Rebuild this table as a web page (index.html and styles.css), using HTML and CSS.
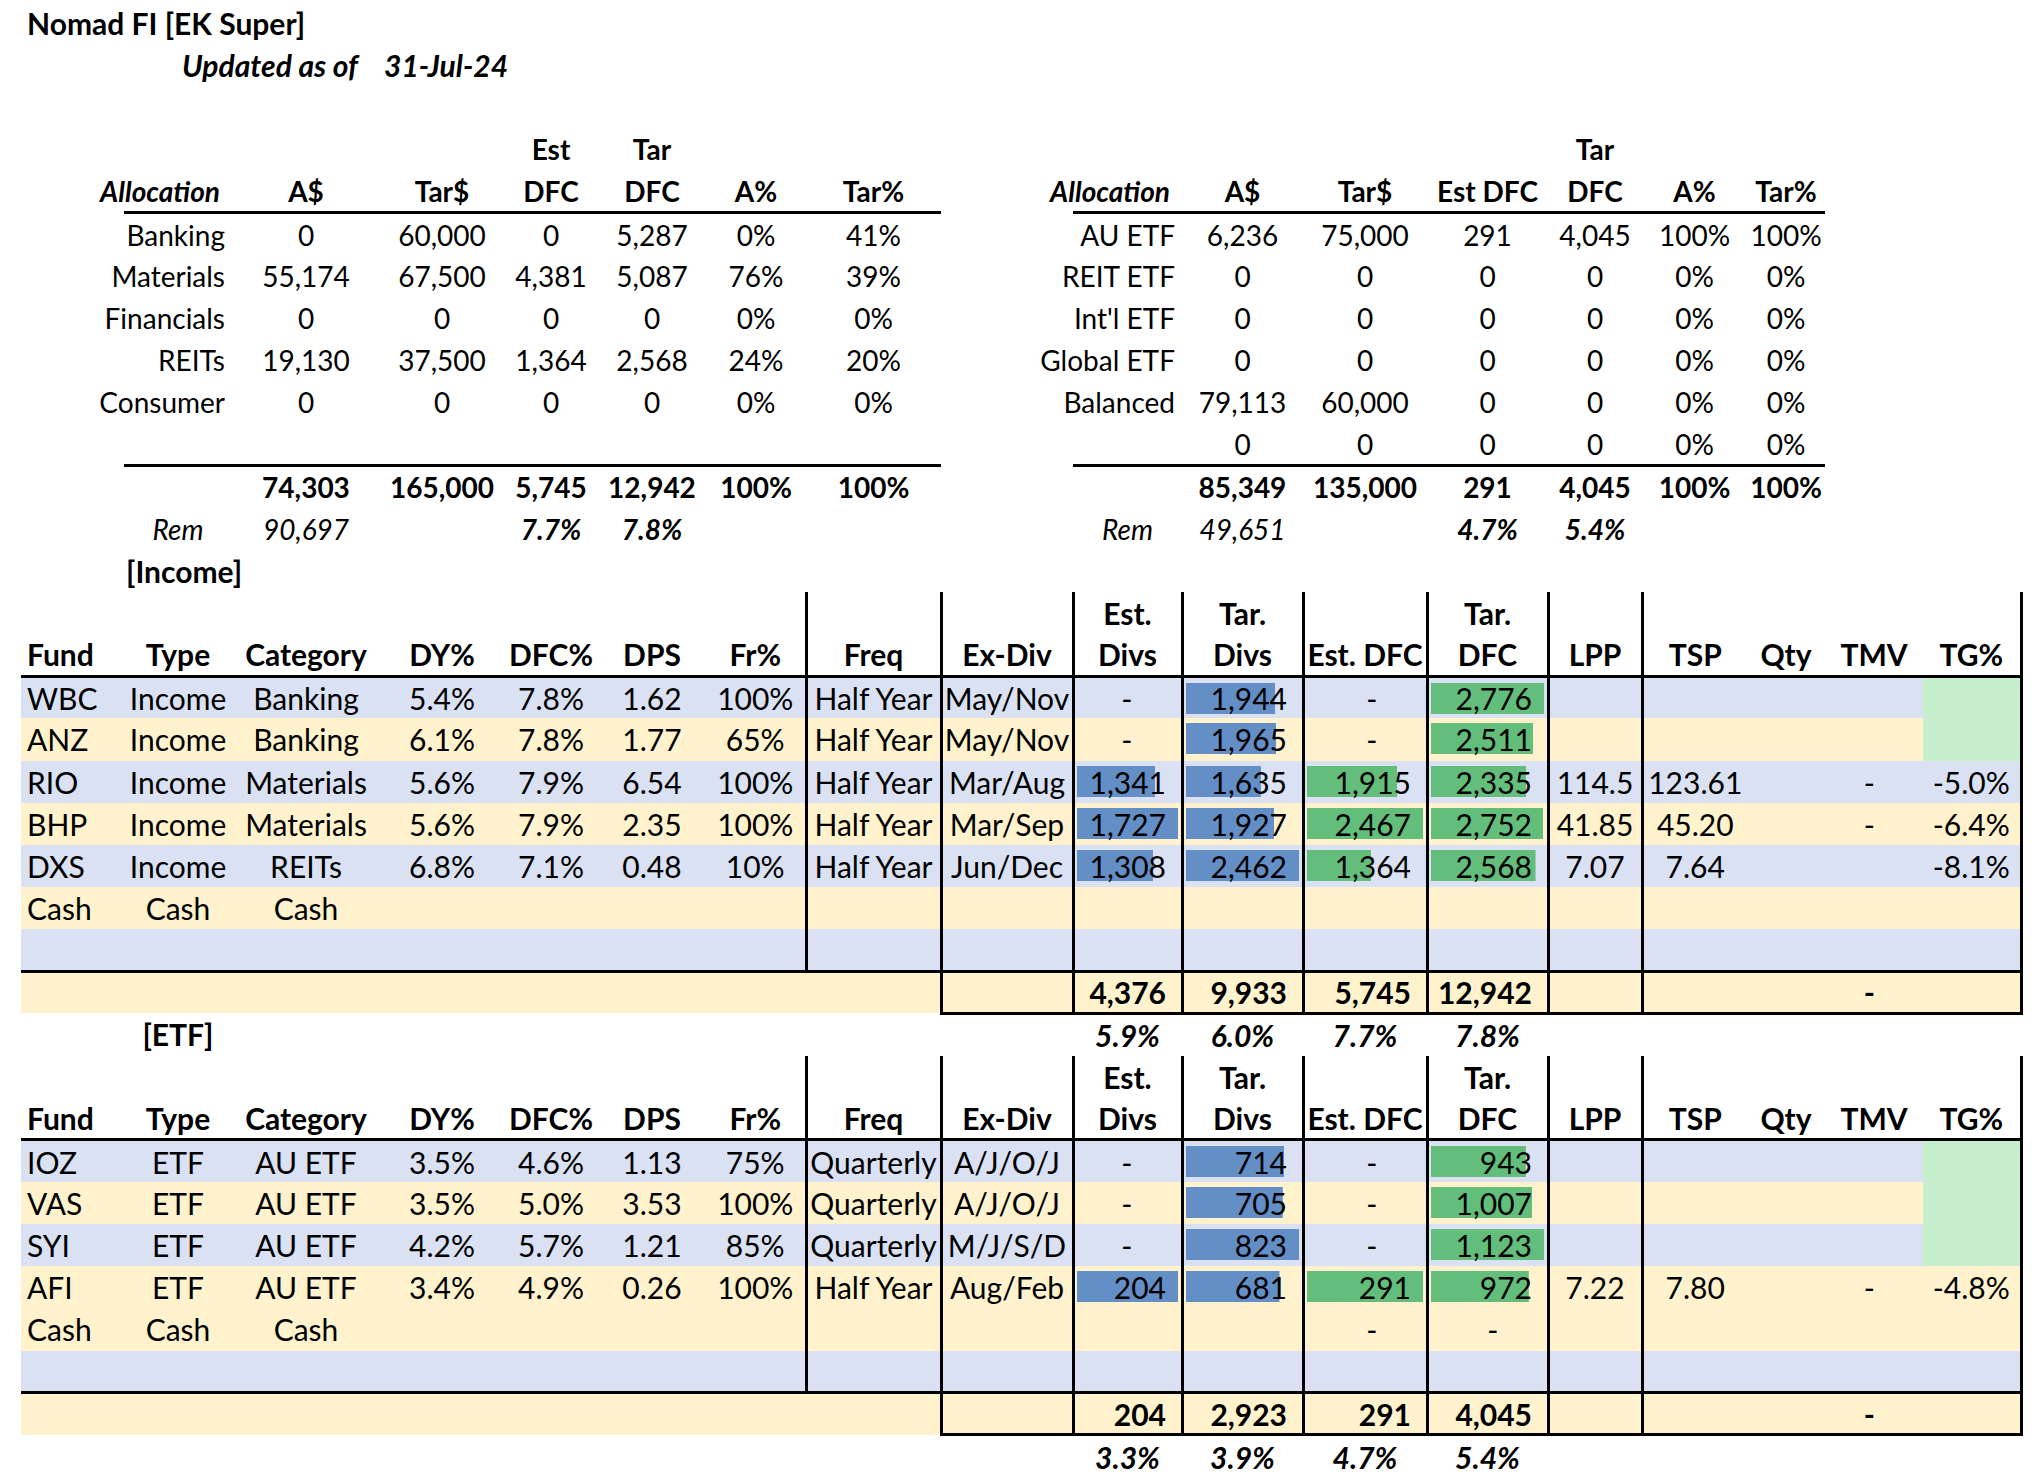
FILE: index.html
```html
<!DOCTYPE html>
<html lang="en">
<head>
<meta charset="utf-8">
<title>Nomad FI [EK Super]</title>
<link rel="stylesheet" href="styles.css">
</head>
<body>
<table class="sheet">
  <colgroup>
    <col class="w103"><col class="w108"><col class="w148"><col class="w124"><col class="w94"><col class="w108"><col class="w100"><col class="w135"><col class="w132"><col class="w109"><col class="w121"><col class="w124"><col class="w121"><col class="w94"><col class="w105"><col class="w78"><col class="w98"><col class="w98">
  </colgroup>
  <tbody>
    <!-- row 0 -->
    <tr><td colspan="6" class="title">Nomad FI [EK Super]</td></tr>
    <!-- row 1 -->
    <tr><td colspan="3" class="upd">Updated as of</td><td colspan="2" class="date">31-Jul-24</td></tr>
    <!-- row 2 -->
    <tr><td></td></tr>
    <!-- row 3 -->
    <tr class="sm"><td></td><td></td><td></td><td></td><td class="b">Est</td><td class="b">Tar</td><td></td><td></td><td></td><td></td><td></td><td></td><td></td><td class="b">Tar</td><td></td><td></td><td></td><td></td></tr>
    <!-- row 4 -->
    <tr class="sm ahead">
      <td></td><td class="alloc ln"><div class="rt">Allocation</div></td><td class="ln">A$</td><td class="ln">Tar$</td><td class="ln">DFC</td><td class="ln">DFC</td><td class="ln">A%</td><td class="ln">Tar%</td>
      <td></td><td class="alloc ln"><div class="rt">Allocation</div></td><td class="ln">A$</td><td class="ln">Tar$</td><td class="ln">Est DFC</td><td class="ln">DFC</td><td class="ln">A%</td><td class="ln">Tar%</td><td></td><td></td>
    </tr>
    <tr class="sm">
      <td></td><td class="lbl"><div class="rt">Banking</div></td><td>0</td><td>60,000</td><td>0</td><td>5,287</td><td>0%</td><td>41%</td>
      <td></td><td class="lbl"><div class="rt">AU ETF</div></td><td>6,236</td><td>75,000</td><td>291</td><td>4,045</td><td>100%</td><td>100%</td><td></td><td></td>
    </tr>
    <tr class="sm">
      <td></td><td class="lbl"><div class="rt">Materials</div></td><td>55,174</td><td>67,500</td><td>4,381</td><td>5,087</td><td>76%</td><td>39%</td>
      <td></td><td class="lbl"><div class="rt">REIT ETF</div></td><td>0</td><td>0</td><td>0</td><td>0</td><td>0%</td><td>0%</td><td></td><td></td>
    </tr>
    <tr class="sm">
      <td></td><td class="lbl"><div class="rt">Financials</div></td><td>0</td><td>0</td><td>0</td><td>0</td><td>0%</td><td>0%</td>
      <td></td><td class="lbl"><div class="rt">Int'l ETF</div></td><td>0</td><td>0</td><td>0</td><td>0</td><td>0%</td><td>0%</td><td></td><td></td>
    </tr>
    <tr class="sm">
      <td></td><td class="lbl"><div class="rt">REITs</div></td><td>19,130</td><td>37,500</td><td>1,364</td><td>2,568</td><td>24%</td><td>20%</td>
      <td></td><td class="lbl"><div class="rt">Global ETF</div></td><td>0</td><td>0</td><td>0</td><td>0</td><td>0%</td><td>0%</td><td></td><td></td>
    </tr>
    <tr class="sm">
      <td></td><td class="lbl"><div class="rt">Consumer</div></td><td>0</td><td>0</td><td>0</td><td>0</td><td>0%</td><td>0%</td>
      <td></td><td class="lbl"><div class="rt">Balanced</div></td><td>79,113</td><td>60,000</td><td>0</td><td>0</td><td>0%</td><td>0%</td><td></td><td></td>
    </tr>
    <tr class="sm">
      <td></td><td class="ln"></td><td class="ln"></td><td class="ln"></td><td class="ln"></td><td class="ln"></td><td class="ln"></td><td class="ln"></td>
      <td></td><td class="ln"></td><td class="ln">0</td><td class="ln">0</td><td class="ln">0</td><td class="ln">0</td><td class="ln">0%</td><td class="ln">0%</td><td></td><td></td>
    </tr>
    <tr class="sm bold">
      <td></td><td></td><td>74,303</td><td>165,000</td><td>5,745</td><td>12,942</td><td>100%</td><td>100%</td>
      <td></td><td></td><td>85,349</td><td>135,000</td><td>291</td><td>4,045</td><td>100%</td><td>100%</td><td></td><td></td>
    </tr>
    <tr class="sm">
      <td></td><td class="i">Rem</td><td class="i">90,697</td><td></td><td class="bi">7.7%</td><td class="bi">7.8%</td><td></td><td></td>
      <td></td><td class="i">Rem</td><td class="i">49,651</td><td></td><td class="bi">4.7%</td><td class="bi">5.4%</td><td></td><td></td><td></td><td></td>
    </tr>
    <tr><td></td><td class="b">[Income]</td></tr>

    <!-- Income table -->
    <tr class="m"><td></td><td></td><td></td><td></td><td></td><td></td><td></td><td></td><td></td><td class="b">Est.</td><td class="b">Tar.</td><td></td><td class="b">Tar.</td><td></td><td></td><td></td><td></td><td></td></tr>
    <tr class="m hd"><td>Fund</td><td>Type</td><td>Category</td><td>DY%</td><td>DFC%</td><td>DPS</td><td>Fr%</td><td>Freq</td><td>Ex-Div</td><td>Divs</td><td>Divs</td><td>Est. DFC</td><td>DFC</td><td>LPP</td><td>TSP</td><td>Qty</td><td>TMV</td><td>TG%</td></tr>
    <tr class="m bl"><td>WBC</td><td>Income</td><td>Banking</td><td>5.4%</td><td>7.8%</td><td>1.62</td><td>100%</td><td>Half Year</td><td>May/Nov</td><td class="d">-</td><td class="r bar blue" style="--p:.7896">1,944</td><td class="d">-</td><td class="r bar green" style="--p:1">2,776</td><td></td><td></td><td></td><td></td><td class="tg"></td></tr>
    <tr class="m ye"><td>ANZ</td><td>Income</td><td>Banking</td><td>6.1%</td><td>7.8%</td><td>1.77</td><td>65%</td><td>Half Year</td><td>May/Nov</td><td class="d">-</td><td class="r bar blue" style="--p:.7981">1,965</td><td class="d">-</td><td class="r bar green" style="--p:.9045">2,511</td><td></td><td></td><td></td><td></td><td class="tg"></td></tr>
    <tr class="m bl"><td>RIO</td><td>Income</td><td>Materials</td><td>5.6%</td><td>7.9%</td><td>6.54</td><td>100%</td><td>Half Year</td><td>Mar/Aug</td><td class="r bar blue" style="--p:.7765">1,341</td><td class="r bar blue" style="--p:.6641">1,635</td><td class="r bar green" style="--p:.7762">1,915</td><td class="r bar green" style="--p:.8411">2,335</td><td>114.5</td><td>123.61</td><td></td><td class="d">-</td><td>-5.0%</td></tr>
    <tr class="m ye"><td>BHP</td><td>Income</td><td>Materials</td><td>5.6%</td><td>7.9%</td><td>2.35</td><td>100%</td><td>Half Year</td><td>Mar/Sep</td><td class="r bar blue" style="--p:1">1,727</td><td class="r bar blue" style="--p:.7827">1,927</td><td class="r bar green" style="--p:1">2,467</td><td class="r bar green" style="--p:.9914">2,752</td><td>41.85</td><td>45.20</td><td></td><td class="d">-</td><td>-6.4%</td></tr>
    <tr class="m bl"><td>DXS</td><td>Income</td><td>REITs</td><td>6.8%</td><td>7.1%</td><td>0.48</td><td>10%</td><td>Half Year</td><td>Jun/Dec</td><td class="r bar blue" style="--p:.7574">1,308</td><td class="r bar blue" style="--p:1">2,462</td><td class="r bar green" style="--p:.5529">1,364</td><td class="r bar green" style="--p:.9251">2,568</td><td>7.07</td><td>7.64</td><td></td><td></td><td>-8.1%</td></tr>
    <tr class="m ye"><td>Cash</td><td>Cash</td><td>Cash</td><td></td><td></td><td></td><td></td><td></td><td></td><td></td><td></td><td></td><td></td><td></td><td></td><td></td><td></td><td></td></tr>
    <tr class="m bl end"><td></td><td></td><td></td><td></td><td></td><td></td><td></td><td></td><td></td><td></td><td></td><td></td><td></td><td></td><td></td><td></td><td></td><td></td></tr>
    <tr class="tot ye"><td></td><td></td><td></td><td></td><td></td><td></td><td></td><td></td><td></td><td class="r">4,376</td><td class="r">9,933</td><td class="r">5,745</td><td class="r">12,942</td><td></td><td></td><td></td><td class="d">-</td><td></td></tr>
    <tr><td></td><td class="b">[ETF]</td><td></td><td></td><td></td><td></td><td></td><td></td><td></td><td class="bi">5.9%</td><td class="bi">6.0%</td><td class="bi">7.7%</td><td class="bi">7.8%</td><td></td><td></td><td></td><td></td><td></td></tr>

    <!-- ETF table -->
    <tr class="m"><td></td><td></td><td></td><td></td><td></td><td></td><td></td><td></td><td></td><td class="b">Est.</td><td class="b">Tar.</td><td></td><td class="b">Tar.</td><td></td><td></td><td></td><td></td><td></td></tr>
    <tr class="m hd"><td>Fund</td><td>Type</td><td>Category</td><td>DY%</td><td>DFC%</td><td>DPS</td><td>Fr%</td><td>Freq</td><td>Ex-Div</td><td>Divs</td><td>Divs</td><td>Est. DFC</td><td>DFC</td><td>LPP</td><td>TSP</td><td>Qty</td><td>TMV</td><td>TG%</td></tr>
    <tr class="m bl"><td>IOZ</td><td>ETF</td><td>AU ETF</td><td>3.5%</td><td>4.6%</td><td>1.13</td><td>75%</td><td>Quarterly</td><td>A/J/O/J</td><td class="d">-</td><td class="r bar blue" style="--p:.8676">714</td><td class="d">-</td><td class="r bar green" style="--p:.8397">943</td><td></td><td></td><td></td><td></td><td class="tg"></td></tr>
    <tr class="m ye"><td>VAS</td><td>ETF</td><td>AU ETF</td><td>3.5%</td><td>5.0%</td><td>3.53</td><td>100%</td><td>Quarterly</td><td>A/J/O/J</td><td class="d">-</td><td class="r bar blue" style="--p:.8566">705</td><td class="d">-</td><td class="r bar green" style="--p:.8967">1,007</td><td></td><td></td><td></td><td></td><td class="tg"></td></tr>
    <tr class="m bl"><td>SYI</td><td>ETF</td><td>AU ETF</td><td>4.2%</td><td>5.7%</td><td>1.21</td><td>85%</td><td>Quarterly</td><td>M/J/S/D</td><td class="d">-</td><td class="r bar blue" style="--p:1">823</td><td class="d">-</td><td class="r bar green" style="--p:1">1,123</td><td></td><td></td><td></td><td></td><td class="tg"></td></tr>
    <tr class="m ye"><td>AFI</td><td>ETF</td><td>AU ETF</td><td>3.4%</td><td>4.9%</td><td>0.26</td><td>100%</td><td>Half Year</td><td>Aug/Feb</td><td class="r bar blue" style="--p:1">204</td><td class="r bar blue" style="--p:.8275">681</td><td class="r bar green" style="--p:1">291</td><td class="r bar green" style="--p:.8655">972</td><td>7.22</td><td>7.80</td><td></td><td class="d">-</td><td>-4.8%</td></tr>
    <tr class="m ye"><td>Cash</td><td>Cash</td><td>Cash</td><td></td><td></td><td></td><td></td><td></td><td></td><td></td><td></td><td class="d">-</td><td class="d">-</td><td></td><td></td><td></td><td></td><td></td></tr>
    <tr class="m bl end"><td></td><td></td><td></td><td></td><td></td><td></td><td></td><td></td><td></td><td></td><td></td><td></td><td></td><td></td><td></td><td></td><td></td><td></td></tr>
    <tr class="tot ye"><td></td><td></td><td></td><td></td><td></td><td></td><td></td><td></td><td></td><td class="r">204</td><td class="r">2,923</td><td class="r">291</td><td class="r">4,045</td><td></td><td></td><td></td><td class="d">-</td><td></td></tr>
    <tr><td></td><td></td><td></td><td></td><td></td><td></td><td></td><td></td><td></td><td class="bi">3.3%</td><td class="bi">3.9%</td><td class="bi">4.7%</td><td class="bi">5.4%</td><td></td><td></td><td></td><td></td><td></td></tr>
  </tbody>
</table>
</body>
</html>
```

FILE: styles.css
```css
:root {
  --band-blue: #d9e1f2;
  --band-yellow: #fff2cc;
  --bar-blue: #638ec6;
  --bar-green: #63be7b;
  --good: #c6efce;
  --line: 3px solid #000;
}

body {
  margin: 0;
  background: #fff;
  color: #000;
  font-family: Lato, "Liberation Sans", sans-serif;
  font-size: 30px;
}

.sheet {
  border-collapse: collapse;
  table-layout: fixed;
  width: 2000px;
  margin: 2px 0 0 21px;
}

.w103 { width: 103px; }
.w108 { width: 108px; }
.w148 { width: 148px; }
.w124 { width: 124px; }
.w94 { width: 94px; }
.w100 { width: 100px; }
.w135 { width: 135px; }
.w132 { width: 132px; }
.w109 { width: 109px; }
.w121 { width: 121px; }
.w105 { width: 105px; }
.w78 { width: 78px; }
.w98 { width: 98px; }

.sheet tr { height: 42.15px; }

.sheet td {
  padding: 0 2px;
  text-align: center;
  vertical-align: middle;
  white-space: nowrap;
  line-height: 1;
}

/* the two allocation summaries use a slightly smaller face */
.sm td { font-size: 28px; }

.b { font-weight: 700; }
.i { font-style: italic; }
.bi { font-weight: 700; font-style: italic; }
.bold td { font-weight: 700; }

.sheet td.title {
  text-align: left;
  padding-left: 6px;
  font-weight: 700;
}
.sheet td.upd {
  text-align: right;
  padding-right: 22px;
  font-weight: 700;
  font-style: italic;
}
.sheet td.date {
  text-align: left;
  padding-left: 4px;
  font-weight: 700;
  font-style: italic;
}

/* right-aligned labels that spill to the left, as in a spreadsheet */
.rt {
  display: flex;
  justify-content: flex-end;
  white-space: nowrap;
}

.ahead td { font-weight: 700; }
.sheet td.alloc {
  padding-right: 12px;
  font-style: italic;
}
.sheet td.lbl { padding-right: 7px; }
.sheet td.ln { border-bottom: var(--line); }

/* main tables */
.bl { background: var(--band-blue); }
.ye { background: var(--band-yellow); }

.m td:nth-child(n+7):nth-child(-n+14),
.m td:nth-child(18) { border-right: var(--line); }
.m td:first-child { text-align: left; padding-left: 6px; }
.hd td { font-weight: 700; border-bottom: var(--line); }
.end td { border-bottom: var(--line); }

.tot td { font-weight: 700; }
.tot td:nth-child(n+8):nth-child(-n+14),
.tot td:nth-child(18) { border-right: var(--line); }
.tot td:nth-child(n+9) { border-bottom: var(--line); }

.sheet td.r { text-align: right; padding-right: 14.5px; }
.sheet td.d { text-align: right; padding-right: 48px; }
.sheet td.tg { background: var(--good); }

.bar {
  background-image: linear-gradient(var(--c), var(--c));
  background-repeat: no-repeat;
  background-position: 2.5px 5px;
  background-size: calc((100% - 5px) * var(--p)) 31px;
}
.blue { --c: var(--bar-blue); }
.green { --c: var(--bar-green); }
```
